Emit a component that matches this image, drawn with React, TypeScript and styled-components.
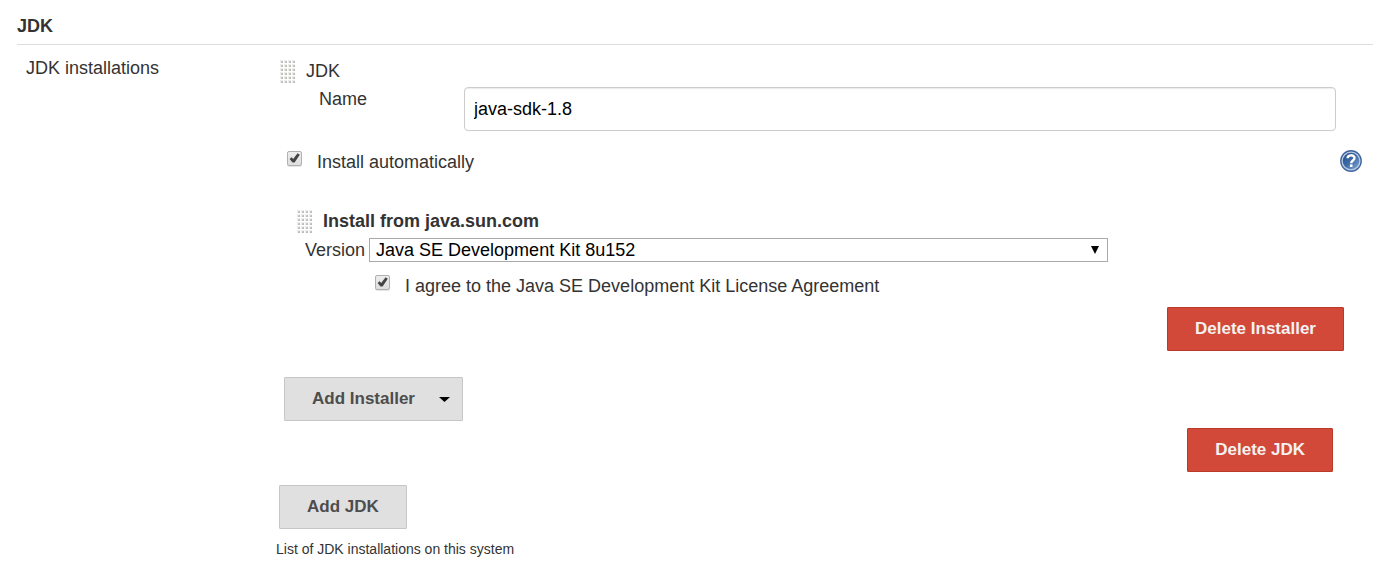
import React from "react";
import styled, { createGlobalStyle } from "styled-components";

const GlobalStyle = createGlobalStyle`
  *, *::before, *::after { box-sizing: border-box; }
  body {
    margin: 0;
    background: #fff;
    color: #333;
    font: 18px/20px "Liberation Sans", Arial, sans-serif;
  }
  button, input, select { font: inherit; margin: 0; }
`;

const Page = styled.main`
  padding: 16px 10px 0 17px;
`;

const SectionTitle = styled.h1`
  margin: 0;
  padding-bottom: 8px;
  border-bottom: 1px solid #ddd;
  font-size: 18px;
  line-height: 20px;
`;

const Section = styled.section`
  display: grid;
  grid-template-columns: 250px 1fr;
  padding: 13px 0 0 9px;
`;

const Installations = styled.div`
  display: flex;
  flex-direction: column;
  padding-top: 2px;
`;

const ItemHeader = styled.div<{ $nested?: boolean }>`
  display: flex;
  align-items: flex-start;
  gap: 11px;
  height: 24px;
  padding-left: ${(p) => (p.$nested ? 20 : 3)}px;
  font-weight: ${(p) => (p.$nested ? "bold" : "normal")};
  line-height: 22px;
`;

const GripIcon = styled.svg`
  flex: none;
  display: block;
`;

const NameRow = styled.div`
  display: grid;
  grid-template-columns: 145px 1fr;
  padding: 3px 37px 0 43px;
`;

const NameLabel = styled.label`
  padding-top: 2px;
`;

const TextInput = styled.input`
  width: 100%;
  height: 44px;
  padding: 0 9px;
  border: 1px solid #ccc;
  border-radius: 4px;
  background: #fff;
  box-shadow: inset 0 1px 1px rgba(0, 0, 0, 0.08);
  color: #000;
`;

const CheckRow = styled.div<{ $nested?: boolean }>`
  display: flex;
  align-items: flex-start;
  height: 22px;
  margin-top: ${(p) => (p.$nested ? 12 : 19)}px;
  padding: 0 11px 0 ${(p) => (p.$nested ? 99 : 11)}px;
`;

const CheckLabel = styled.label`
  display: flex;
  align-items: flex-start;
  gap: 15px;
  margin-right: auto;

  span { padding-top: 2px; }
`;

const CheckMark = styled.svg`
  display: block;
  grid-area: 1 / 1;
  pointer-events: none;
`;

const CheckBox = styled.div`
  display: grid;
  flex: none;
  place-items: center;
  width: 15px;
  height: 15px;
  margin-top: 1px;
`;

const CheckInput = styled.input`
  appearance: none;
  grid-area: 1 / 1;
  width: 15px;
  height: 15px;
  border: 1px solid #b0b0b0;
  border-radius: 2px;
  background: linear-gradient(#ededed, #dedede);
  box-shadow: 0 1px 0 rgba(0, 0, 0, 0.1);

  &:not(:checked) + svg { visibility: hidden; }
`;

const HelpButton = styled.button`
  width: 22px;
  height: 22px;
  padding: 0;
  border: 0;
  background: none;

  svg { display: block; }
`;

const Installer = styled.div`
  padding-top: 38px;
`;

const VersionRow = styled.div`
  display: flex;
  align-items: center;
  gap: 4px;
  padding: 4px 265px 0 29px;
`;

const SelectBox = styled.div`
  display: grid;
  flex: 1;
  align-items: center;

  svg {
    grid-area: 1 / 1;
    justify-self: end;
    margin-right: 9px;
    pointer-events: none;
  }
`;

const Select = styled.select`
  appearance: none;
  grid-area: 1 / 1;
  width: 100%;
  height: 24px;
  padding: 0 24px 0 6px;
  border: 1px solid #a9a9a9;
  border-radius: 0;
  background: #fff;
  color: #000;
`;

const Actions = styled.div<{ $top: number; $left?: number; $right?: number }>`
  display: flex;
  justify-content: ${(p) => (p.$right ? "flex-end" : "flex-start")};
  padding: ${(p) => p.$top}px ${(p) => p.$right ?? 0}px 0 ${(p) => p.$left ?? 0}px;
`;

const Button = styled.button<{ $danger?: boolean; $menu?: boolean }>`
  display: flex;
  align-items: center;
  gap: 24px;
  height: 44px;
  padding: 0 ${(p) => (p.$menu ? 12 : 27)}px 0 27px;
  border: 1px solid ${(p) => (p.$danger ? "#b93a2b" : "#c6c6c6")};
  border-radius: 1px;
  background: ${(p) => (p.$danger ? "#d24939" : "#e0e0e0")};
  color: ${(p) => (p.$danger ? "#f2f2f2" : "#4d4d4d")};
  font-size: 17px;
  font-weight: bold;
  white-space: nowrap;
`;

const Description = styled.p`
  margin: 10px 0 0;
  font-size: 14px;
  line-height: 20px;
`;

function Grip() {
  const dots = [];
  for (let row = 0; row < 6; row++) {
    for (let col = 0; col < 4; col++) {
      const x = col * 4 + 1;
      const y = row * 4;
      dots.push(
        <g key={`${row}-${col}`}>
          <rect x={x} y={y} width="3" height="3" fill="#ececea" />
          <path d={`M${x + 3} ${y + 1}v2h-2v-1h1v-1z`} fill="#bdbdb9" />
          <rect x={x + 1} y={y + 1} width="1" height="1" fill="#d2d2cf" />
        </g>
      );
    }
  }
  return (
    <GripIcon width="16" height="24" viewBox="0 0 16 24" aria-hidden="true">
      {dots}
    </GripIcon>
  );
}

function Check({ children }: { children: string }) {
  return (
    <CheckLabel>
      <CheckBox>
        <CheckInput type="checkbox" defaultChecked />
        <CheckMark width="15" height="15" viewBox="0 0 15 15" aria-hidden="true">
          <path d="M2.6 8 4.6 6.300 6.200 8 10.600 2.300 12.800 3.800 7.600 11.500H5.500z" fill="#444" />
        </CheckMark>
      </CheckBox>
      <span>{children}</span>
    </CheckLabel>
  );
}

function HelpIcon() {
  return (
    <svg width="22" height="22" viewBox="0 0 22 22" aria-hidden="true">
      <defs>
        <linearGradient id="help-fill" x1="0" y1="0" x2="1" y2="1">
          <stop offset="0" stopColor="#204a87" />
          <stop offset="0.5" stopColor="#3f6ca8" />
          <stop offset="1" stopColor="#86acd8" />
        </linearGradient>
      </defs>
      <circle cx="11" cy="11" r="10.9" fill="#41669f" />
      <circle cx="11" cy="11" r="8.9" fill="url(#help-fill)" stroke="#b9cbe3" strokeWidth="1.3" />
      <path
        d="M7.6 8.200C7.600 4.400 14.500 4.400 14.500 8C14.500 10.500 11.200 10.500 11.200 13.200"
        fill="none"
        stroke="#fff"
        strokeWidth="2.4"
      />
      <rect x="9.9" y="14.400" width="2.600" height="2.600" fill="#fff" />
    </svg>
  );
}

export default function App() {
  return (
    <>
      <GlobalStyle />
      <Page>
        <SectionTitle>JDK</SectionTitle>
        <Section>
          <div>JDK installations</div>
          <Installations>
            <ItemHeader>
              <Grip />
              JDK
            </ItemHeader>
            <NameRow>
              <NameLabel htmlFor="jdk-name">Name</NameLabel>
              <TextInput id="jdk-name" type="text" defaultValue="java-sdk-1.8" />
            </NameRow>
            <CheckRow>
              <Check>Install automatically</Check>
              <HelpButton type="button" aria-label="Help">
                <HelpIcon />
              </HelpButton>
            </CheckRow>
            <Installer>
              <ItemHeader $nested>
                <Grip />
                Install from java.sun.com
              </ItemHeader>
              <VersionRow>
                <label htmlFor="jdk-version">Version</label>
                <SelectBox>
                  <Select id="jdk-version" defaultValue="8u152">
                    <option value="8u152">Java SE Development Kit 8u152</option>
                  </Select>
                  <svg width="8" height="8" viewBox="0 0 8 8" aria-hidden="true">
                    <path d="M0 0h8L4 8z" fill="#000" />
                  </svg>
                </SelectBox>
              </VersionRow>
              <CheckRow $nested>
                <Check>I agree to the Java SE Development Kit License Agreement</Check>
              </CheckRow>
              <Actions $top={11} $right={29}>
                <Button type="button" $danger>Delete Installer</Button>
              </Actions>
            </Installer>
            <Actions $top={26} $left={8}>
              <Button type="button" $menu>
                Add Installer
                <svg width="11" height="5" viewBox="0 0 11 5" aria-hidden="true">
                  <path d="M0 0h11L5.500 5z" fill="#000" />
                </svg>
              </Button>
            </Actions>
            <Actions $top={7} $right={40}>
              <Button type="button" $danger>Delete JDK</Button>
            </Actions>
            <Actions $top={13} $left={3}>
              <Button type="button">Add JDK</Button>
            </Actions>
            <Description>List of JDK installations on this system</Description>
          </Installations>
        </Section>
      </Page>
    </>
  );
}
